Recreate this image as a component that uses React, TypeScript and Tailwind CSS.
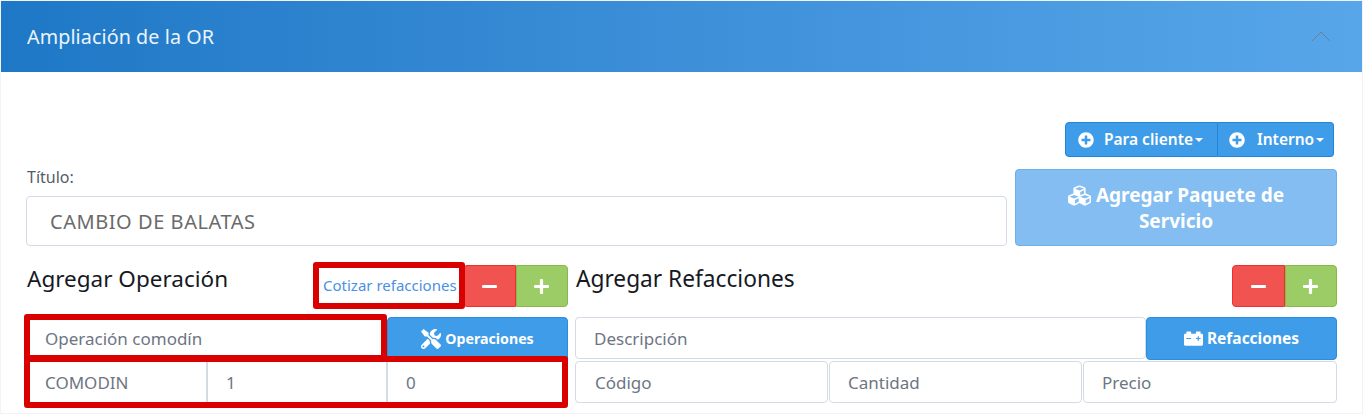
import { FaPlusCircle, FaTools, FaCubes, FaCarBattery, FaMinus, FaPlus } from "react-icons/fa";

const inputBox =
  "h-[42px] min-w-0 flex items-center border border-[#d4dae6] bg-white rounded-[4px] pt-[2px] text-[17px] text-[#6e7583]";

function MinusPlus() {
  return (
    <div className="flex h-[42px] w-[105px] shrink-0">
      <button className="flex-1 flex items-center justify-center bg-[#f15350] border border-[#ee2f2b] rounded-l-[4px] text-white">
        <FaMinus className="w-[17px] h-[17px]" />
      </button>
      <button className="flex-1 flex items-center justify-center bg-[#9ccc65] border border-[#85bb47] rounded-r-[4px] text-white">
        <FaPlus className="w-[17px] h-[17px]" />
      </button>
    </div>
  );
}

export default function App() {
  return (
    <div className="h-[414px] overflow-hidden bg-[#f1f3f9] px-px pt-px font-['Noto_Sans',sans-serif]">
      <div className="bg-white h-[412px]">
        {/* Header */}
        <div className="h-[71px] flex items-center justify-between pl-[26px] pr-[31px] bg-linear-to-r from-[#1e78c6] to-[#57a6ea]">
          <h2 className="pt-px text-[19.7px] tracking-[0.1px] text-[#eaf4fc]">Ampliación de la OR</h2>
          <svg width="20" height="11" viewBox="0 0 20 11" fill="none" stroke="#6f7f8f" strokeWidth="1">
            <path d="M1 10 L10 1 L19 10" />
          </svg>
        </div>

        <div className="pl-[25px] pr-[25px]">
          {/* Dropdown buttons */}
          <div className="flex justify-end pt-[50px] pr-[3px]">
            <div className="flex h-[35px] text-white text-[15.5px] font-semibold">
              <button className="w-[153px] flex items-center gap-[10px] pl-[12px] bg-[#3f9ce8] border border-[#1f85d8] rounded-l-[4px]">
                <FaPlusCircle className="w-[16px] h-[16px]" />
                <span className="flex items-center gap-[2px] pt-px">
                  Para cliente
                  <span className="border-x-[4px] border-x-transparent border-t-[4px] border-t-white" />
                </span>
              </button>
              <button className="w-[116px] flex items-center gap-[12px] pl-[11px] bg-[#3f9ce8] border border-l-0 border-[#1f85d8] rounded-r-[4px]">
                <FaPlusCircle className="w-[16px] h-[16px]" />
                <span className="flex items-center gap-[2px] pt-px">
                  Interno
                  <span className="border-x-[4px] border-x-transparent border-t-[4px] border-t-white" />
                </span>
              </button>
            </div>
          </div>

          {/* Titulo */}
          <div className="flex gap-[8px] mt-[12px]">
            <div className="w-[981px] h-[77px] flex flex-col justify-end">
              <label className="pl-px text-[16px] leading-[18px] text-[#555c68] mb-[10px]">Título:</label>
              <div className="h-[50px] shrink-0 flex items-center border border-[#d4dae6] rounded-[4px] pl-[23px] pt-px text-[20px] tracking-[0.55px] text-[#6a6a6a]">
                CAMBIO DE BALATAS
              </div>
            </div>
            <button className="w-[322px] h-[77px] flex flex-col items-center justify-center rounded-[4px] pt-px bg-[#83bdf1] border border-[#6cafe9] text-white text-[19px] font-bold leading-[26px]">
              <span className="flex items-center gap-[5px]">
                <FaCubes className="w-[23px] h-[23px]" /> Agregar Paquete de
              </span>
              <span>Servicio</span>
            </button>
          </div>

          {/* Operacion / Refacciones */}
          <div className="flex gap-[7px] mt-[19px]">
            <div className="w-[542px] shrink-0">
              <div className="relative flex h-[42px]">
                <h3 className="w-[297px] pl-px text-[22.5px] text-[#16191f] leading-[28px]">Agregar Operación</h3>
                <a className="w-[140px] pt-[11px] text-[15px] leading-[18px] text-[#4a90e2] whitespace-nowrap">
                  Cotizar refacciones
                </a>
                <MinusPlus />
                <div className="absolute left-[287px] top-[-3px] w-[152px] h-[47px] border-[6px] border-[#d90000] rounded-[3px]" />
              </div>
              <div className="relative mt-[10px]">
                <div className="flex">
                  <div className={`${inputBox} flex-1 rounded-r-none pl-[18px]`}>Operación comodín</div>
                  <button className="w-[181px] h-[43px] flex items-center justify-center gap-[4px] bg-[#3f9ce8] rounded-t-[4px] border border-[#2a8de0] text-white text-[14.2px] font-bold">
                    <FaTools className="w-[20px] h-[20px]" /> Operaciones
                  </button>
                </div>
                <div className="flex mt-px">
                  <div className={`${inputBox} w-[181px] rounded-none pl-[18px]`}>COMODIN</div>
                  <div className={`${inputBox} w-[180px] rounded-none pl-[18px]`}>1</div>
                  <div className={`${inputBox} w-[181px] rounded-none pl-[18px]`}>0</div>
                </div>
                <div className="absolute left-[-2px] top-[-3px] w-[363px] h-[47px] border-[6px] border-[#d90000] rounded-[3px]" />
                <div className="absolute left-[-2px] top-[39px] w-[544px] h-[52px] border-[6px] border-[#d90000] rounded-[3px]" />
              </div>
            </div>

            <div className="flex-1 min-w-0">
              <div className="flex justify-between h-[42px]">
                <h3 className="pl-px text-[22.7px] text-[#16191f] leading-[28px]">Agregar Refacciones</h3>
                <MinusPlus />
              </div>
              <div className="mt-[10px]">
                <div className="flex">
                  <div className={`${inputBox} flex-1 pl-[18px]`}>Descripción</div>
                  <button className="w-[191px] h-[43px] flex items-center justify-center gap-[4px] bg-[#3f9ce8] rounded-[4px] border border-[#2a8de0] text-white text-[15.5px] font-bold">
                    <FaCarBattery className="w-[19px] h-[19px]" /> Refacciones
                  </button>
                </div>
                <div className="flex mt-px gap-px">
                  <div className={`${inputBox} w-[253px] pl-[19px]`}>Código</div>
                  <div className={`${inputBox} w-[253px] pl-[18px]`}>Cantidad</div>
                  <div className={`${inputBox} flex-1 pl-[18px]`}>Precio</div>
                </div>
              </div>
            </div>
          </div>
        </div>
      </div>
    </div>
  );
}
